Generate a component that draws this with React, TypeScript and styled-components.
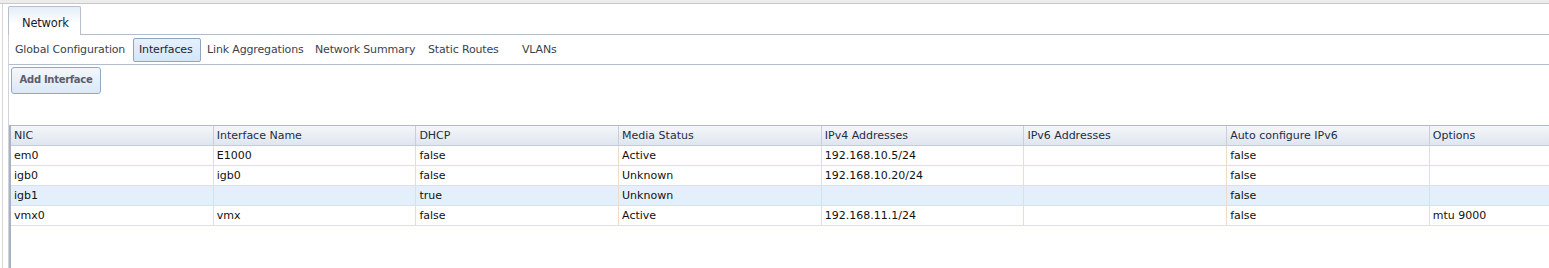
import React from "react";
import styled, { createGlobalStyle } from "styled-components";

const Global = createGlobalStyle`
  html, body { margin: 0; padding: 0; background: #fff; }
  body { font-family: "DejaVu Sans", Verdana, sans-serif; font-size: 11px; color: #222; }
`;

const Page = styled.div`
  width: 1549px;
  height: 268px;
  overflow: hidden;
`;

const TopStrip = styled.div`
  height: 3px;
  background: #ececec;
  border-bottom: 1px solid #c9c9c9;
`;

const Frame = styled.div`
  margin-left: 2px;
  border-left: 1px solid #d6d6d6;
  height: 264px;
  padding-left: 5px;
`;

const TabStrip = styled.div`
  display: flex;
  align-items: flex-end;
  height: 31px;
`;

const MainTab = styled.div`
  width: 73px;
  height: 29px;
  box-sizing: border-box;
  border: 1px solid #b7bfcc;
  border-bottom: none;
  border-radius: 2px 2px 0 0;
  background: linear-gradient(#e4edf9, #ffffff 60%);
  display: flex;
  align-items: center;
  padding: 4px 0 0 13px;
  font-size: 11.5px;
  letter-spacing: -0.2px;
  color: #1a1a2e;
  white-space: nowrap;
`;

const TabLine = styled.div`
  flex: 1;
  border-bottom: 1px solid #b3bccb;
`;

const Panel = styled.div`
  border-left: 1px solid #cfd3da;
  height: 233px;
`;

const SubTabs = styled.div`
  display: flex;
  align-items: center;
  height: 29px;
  border-bottom: 1px solid #b3bccb;
`;

const SubTab = styled.div<{ $w: number; $active?: boolean }>`
  width: ${(p) => p.$w}px;
  flex: none;
  box-sizing: border-box;
  height: 24px;
  display: flex;
  align-items: center;
  padding-left: 5px;
  font-size: 11px;
  letter-spacing: -0.15px;
  white-space: nowrap;
  border: 1px solid ${(p) => (p.$active ? "#8ea6c4" : "transparent")};
  border-radius: 2px;
  background: ${(p) => (p.$active ? "linear-gradient(#e6f0fb, #d6e6f8)" : "transparent")};
  color: ${(p) => (p.$active ? "#1e2330" : "#3a3f4e")};
`;

const Toolbar = styled.div`
  height: 60px;
  padding: 2px 0 0 2px;
  box-sizing: border-box;
`;

const Button = styled.div`
  width: 90px;
  height: 27px;
  box-sizing: border-box;
  border: 1px solid #8fa9c8;
  border-radius: 3px;
  background: linear-gradient(#f3f7fc, #dce8f6);
  display: flex;
  align-items: center;
  justify-content: center;
  font-weight: bold;
  font-size: 10px;
  letter-spacing: -0.3px;
  color: #5a5e68;
  padding-bottom: 2px;
  white-space: nowrap;
`;

const Grid = styled.div`
  border-left: 2px solid #a9b1c2;
  height: 144px;
`;

const Row = styled.div<{ $header?: boolean; $sel?: boolean }>`
  display: flex;
  height: ${(p) => (p.$header ? 21 : 20)}px;
  box-sizing: border-box;
  border-top: ${(p) => (p.$header ? "1px solid #b2b9c6" : "none")};
  border-bottom: 1px solid ${(p) => (p.$header ? "#c6ccd6" : "#eedccb")};
  background: ${(p) =>
    p.$header ? "linear-gradient(#f4f6f9, #dfe6ef)" : p.$sel ? "#e3effa" : "#fff"};
  color: ${(p) => (p.$header ? "#1d2c45" : "#111")};
`;

const Cell = styled.div<{ $header?: boolean }>`
  width: 202.7px;
  flex: none;
  box-sizing: border-box;
  padding-left: 3px;
  display: flex;
  align-items: center;
  font-size: 11px;
  border-right: 1px solid ${(p) => (p.$header ? "#c9cfd9" : "#eedccb")};
  white-space: nowrap;
`;

const columns = [
  "NIC",
  "Interface Name",
  "DHCP",
  "Media Status",
  "IPv4 Addresses",
  "IPv6 Addresses",
  "Auto configure IPv6",
  "Options",
];

const rows = [
  ["em0", "E1000", "false", "Active", "192.168.10.5/24", "", "false", ""],
  ["igb0", "igb0", "false", "Unknown", "192.168.10.20/24", "", "false", ""],
  ["igb1", "", "true", "Unknown", "", "", "false", ""],
  ["vmx0", "vmx", "false", "Active", "192.168.11.1/24", "", "false", "mtu 9000"],
];

const subTabs: { label: string; w: number; active?: boolean }[] = [
  { label: "Global Configuration", w: 124 },
  { label: "Interfaces", w: 68, active: true },
  { label: "Link Aggregations", w: 108 },
  { label: "Network Summary", w: 113 },
  { label: "Static Routes", w: 94 },
  { label: "VLANs", w: 50 },
];

export default function App() {
  return (
    <Page>
      <Global />
      <TopStrip />
      <Frame>
        <TabStrip>
          <MainTab>Network</MainTab>
          <TabLine />
        </TabStrip>
        <Panel>
          <SubTabs>
            {subTabs.map((t) => (
              <SubTab key={t.label} $w={t.w} $active={t.active}>
                {t.label}
              </SubTab>
            ))}
          </SubTabs>
          <Toolbar>
            <Button>Add Interface</Button>
          </Toolbar>
          <Grid>
            <Row $header>
              {columns.map((c) => (
                <Cell key={c} $header>
                  {c}
                </Cell>
              ))}
            </Row>
            {rows.map((r, i) => (
              <Row key={i} $sel={i === 2}>
                {r.map((v, j) => (
                  <Cell key={j}>{v}</Cell>
                ))}
              </Row>
            ))}
          </Grid>
        </Panel>
      </Frame>
    </Page>
  );
}
